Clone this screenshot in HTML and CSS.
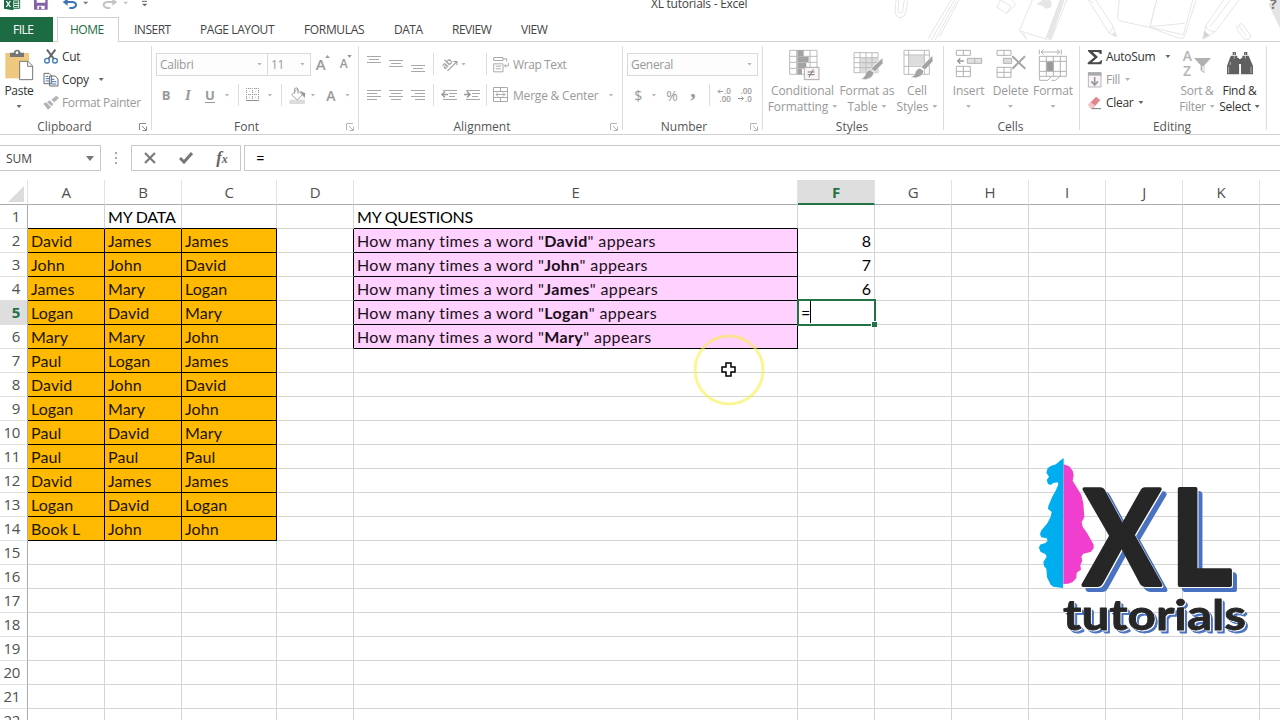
FILE: index.html
```html
<!DOCTYPE html>
<html lang="en">
<head>
<meta charset="utf-8">
<title>XL tutorials - Excel</title>
<link rel="stylesheet" href="styles.css">
</head>
<body>
<div class="app">
<header class="titlebar">
  <svg class="qat" viewBox="0 0 480 51" width="160" height="17">
    <path d="M38 0H59V25H38" fill="#fff" stroke="#1e6e42" stroke-width="3"/><path d="M42 6h13M42 13h13M42 20h13" stroke="#1e6e42" stroke-width="4"/><path d="M12 0H40V31L12 26Z" fill="#1a6b43"/><path d="M19 3L31 21M31 3L19 21" stroke="#fff" stroke-width="4"/>
    <path d="M102 0H143V29H102Z" fill="#8560a8"/><path d="M110 0H136V8H110ZM112 17H134V27H112Z" fill="#fff"/><path d="M117 20h7v8h-7z" fill="#8560a8"/>
    <path d="M194 6H217Q229 8 228 16Q225 25 208 24" fill="none" stroke="#3b73b9" stroke-width="6"/><path d="M203 -4L188 6L203 17Z" fill="#3b73b9"/><path d="M249 5h16l-8 8z" fill="#777"/>
    <path d="M345 6H322Q310 8 311 16Q314 25 331 24" fill="none" stroke="#c4c4c4" stroke-width="6"/><path d="M337 -4L352 6L337 17Z" fill="#c4c4c4"/><path d="M369 5h16l-8 8z" fill="#c4c4c4"/>
    <path d="M426 4h15" stroke="#666" stroke-width="3"/><path d="M426 11h16l-8 8z" fill="#666"/>
  </svg>
  <span class="doc-title">XL tutorials - Excel</span>
  <svg class="doodles" viewBox="0 0 1320 123" width="440" height="41" fill="none" stroke="#e6e6e6" stroke-width="3">
    <path d="M168 0L165 35Q168 53 183 53Q195 50 197 38L203 2M176 0L174 35Q179 43 187 37L193 0"/>
    <path d="M333 0L264 117M343 0L274 120M350 2L285 120M357 0L298 112"/>
    <path d="M481 0L470 22L500 40L527 14L516 0M481 0L513 18L500 40"/>
    <path d="M577 0L538 92L617 117L668 0M538 92L558 115M549 98L560 118M680 0L634 118L617 117"/><path d="M660 0L620 110L632 117L672 0Z" fill="#e6e6e6"/><path d="M592 12L610 0L633 3V20L618 25L607 16Z" fill="#e6e6e6"/>
    <path d="M745 0L808 100L829 108L820 80L767 0M808 100L820 80M748 0L762 10"/><path d="M821 98L831 110L818 106Z" fill="#ddd"/>
    <path d="M838 0L832 52Q834 62 845 64L925 81L1010 112Q1028 120 1034 108L1068 0M950 0L930 80M950 0L930 80L1033 70M1058 0L1030 104L935 83"/>
    <path d="M1150 0L1097 78L1090 116L1127 94L1197 0M1097 78Q1103 96 1127 94M1171 0L1110 81"/><path d="M1093 92L1088 117L1109 107Z" fill="#d4d4d4"/>
    <path d="M1192 75Q1187 86 1196 96L1214 117Q1230 122 1233 108L1207 72Q1197 68 1198 80L1218 107"/>
    <path d="M1285 12L1320 85V0H1300Z" fill="#e4e4e4" stroke="none"/>
  </svg>
  <span class="help">?</span>
</header>
<nav class="tabs">
  <span class="tab file">FILE</span><span class="tab home">HOME</span><span class="tab t-insert">INSERT</span><span class="tab t-page">PAGE LAYOUT</span><span class="tab t-form">FORMULAS</span><span class="tab t-data">DATA</span><span class="tab t-review">REVIEW</span><span class="tab t-view">VIEW</span>
</nav>
<section class="ribbon">
  <div class="group clipboard">
    <div class="body">
      <div class="big dark"><svg viewBox="18 147 90 96" width="30" height="32"><path d="M22 159H93V235H22Z" fill="#edc87e"/><path d="M36 158H47Q49 149 57 149Q66 149 68 158H78V171H36Z" fill="#767676"/><circle cx="57" cy="158" r="4" fill="#fff"/><path d="M65 184H90L104 198V239H65Z" fill="#fff" stroke="#777" stroke-width="3"/><path d="M89 185V199H103" fill="none" stroke="#777" stroke-width="3"/></svg><span>Paste</span><i class="arr"></i></div>
      <div class="list">
        <div class="cmd dark"><svg viewBox="129 144 48 48" width="16" height="16" fill="none"><path d="M141 146L162 174M166 146L145 174" stroke="#666" stroke-width="6"/><circle cx="141" cy="179" r="7" stroke="#3f79bb" stroke-width="4"/><circle cx="165" cy="179" r="7" stroke="#3f79bb" stroke-width="4"/></svg><span>Cut</span></div>
        <div class="cmd dark"><svg viewBox="127 214 48 48" width="16" height="16" fill="#fff" stroke="#6b6b6b" stroke-width="3"><path d="M130 218H145L152 225V249H130ZM147 226H164L172 235V256H147Z"/><path d="M135 227H143M135 234H145M135 241H145M152 236H161M152 243H167M152 250H167" stroke="#3f79bb"/></svg><span>Copy</span><i class="arr"></i></div>
        <div class="cmd"><svg viewBox="129 282 48 48" width="16" height="16" fill="#b3b3b3"><path d="M169 284L177 291L163 304L154 296ZM149 298L160 309L155 316L141 303ZM138 304L153 318L144 326L130 308Z"/></svg><span>Format Painter</span></div>
      </div>
    </div>
    <div class="label">Clipboard<svg class="launch" viewBox="0 0 8 8" width="8" height="8"><path d="M.5 7V.5H7M3 3L7 7M7.500 3.500V7.500H3.500" fill="none" stroke="#888"/></svg></div>
  </div>

  <div class="group font">
    <div class="body rows">
      <div class="row r1"><span class="combo">Calibri<i class="arr"></i></span><span class="combo">11<i class="arr"></i></span>
        <span class="grow">A<svg viewBox="0 0 6 4" width="5" height="3"><path d="M0 4L3 0L6 4Z" fill="#999"/></svg></span><span class="grow small">A<svg viewBox="0 0 6 4" width="5" height="3"><path d="M0 0L3 4L6 0Z" fill="#999"/></svg></span></div>
      <div class="row r2"><b>B</b><b class="ital">I</b><b class="und">U</b><i class="arr"></i><i class="sep"></i>
        <svg viewBox="0 0 14 14" width="14" height="14"><path d="M.5 0V13M3.500 0V13M6.500 0V13M9.500 0V13M12.500 0V13" stroke="#c9c9c9" stroke-dasharray="1 2"/><path d="M0 .5H13M0 6.500H13M6.500 0V13M.5 0V13M12.500 0V13" stroke="#a2a2a2" stroke-dasharray="1 1"/><path d="M0 12.500H13" stroke="#909090"/></svg><i class="arr"></i><i class="sep"></i>
        <svg viewBox="416 138 51 51" width="17" height="17"><path d="M417 176H464V189H417Z" fill="#dcdcdc"/><path d="M439 145L456 161L441 177L424 162Z" fill="#fff" stroke="#aaa" stroke-width="3"/><path d="M433 158V143Q438 138 443 143V158" fill="none" stroke="#999" stroke-width="3"/><path d="M449 149L465 157L463 172L456 162Z" fill="#999"/></svg><i class="arr"></i><b class="fontcolor">A</b><i class="arr"></i></div>
    </div>
    <div class="label">Font<svg class="launch" viewBox="0 0 8 8" width="8" height="8"><path d="M.5 7V.5H7M3 3L7 7M7.500 3.500V7.500H3.500" fill="none" stroke="#b5b5b5"/></svg></div>
  </div>

  <div class="group align">
    <div class="body rows">
      <div class="row r1">
        <svg viewBox="0 0 14 22" width="14" height="22" stroke="#a8a8a8"><path d="M0 3.500H14M2 6.500H12M0 9.500H14"/></svg>
        <svg viewBox="0 0 14 22" width="14" height="22" stroke="#a8a8a8"><path d="M0 7.500H14M2 10.500H12M0 13.500H14"/></svg>
        <svg viewBox="0 0 14 22" width="14" height="22" stroke="#a8a8a8"><path d="M0 12.500H14M2 15.500H12M0 18.500H14"/></svg>
        <i class="sep"></i>
        <svg viewBox="183 50 50 50" width="17" height="17"><text x="186" y="86" transform="rotate(-45 196 78)" class="svg-ab">ab</text><path d="M202 94L229 67M219 66H230V77" fill="none" stroke="#999" stroke-width="3"/></svg>
        <i class="arr near"></i><i class="sep"></i>
        <svg viewBox="341 46 48 50" width="16" height="17" fill="none" stroke="#aaa" stroke-width="3"><path d="M343 50H371V59H343ZM343 69H371V93H343ZM349 76H365M349 84H365M371 54H382V62M388 66V75H376M380 70L375 75L380 80"/></svg>
        <span class="wrap">Wrap Text</span>
      </div>
      <div class="row r2">
        <svg viewBox="0 0 14 12" width="14" height="12" stroke="#a8a8a8"><path d="M0 1.500H14M0 4.500H10M0 7.500H14M0 10.500H10"/></svg>
        <svg viewBox="0 0 14 12" width="14" height="12" stroke="#a8a8a8"><path d="M0 1.500H14M2 4.500H12M0 7.500H14M2 10.500H12"/></svg>
        <svg viewBox="0 0 14 12" width="14" height="12" stroke="#a8a8a8"><path d="M0 1.500H14M4 4.500H14M0 7.500H14M4 10.500H14"/></svg>
        <i class="sep"></i>
        <svg viewBox="0 0 16 12" width="16" height="12" stroke="#a8a8a8" fill="none"><path d="M2 1.500H16M8 4.500H16M8 7.500H14M2 10.500H16"/><path d="M1 5.500H7M4 2.500L1 5.500L4 8.500" stroke="#999" stroke-width="1.500"/></svg>
        <svg viewBox="0 0 16 12" width="16" height="12" stroke="#a8a8a8" fill="none"><path d="M2 1.500H16M8 4.500H16M8 7.500H14M2 10.500H16"/><path d="M0 5.500H6M3 2.500L6 5.500L3 8.500" stroke="#999" stroke-width="1.500"/></svg>
        <i class="sep"></i>
        <svg viewBox="0 0 16 16" width="16" height="16" stroke="#aaa" fill="none"><path d="M.5 .5H14.500V14.500H.5ZM.5 4.500H14.500M.5 10.500H14.500M7.500 0V4M7.500 11V15M3 7.500H12M5 5.500L3 7.500L5 9.500M10 5.500L12 7.500L10 9.500"/></svg>
        <span class="merge">Merge &amp; Center</span><i class="arr"></i>
      </div>
    </div>
    <div class="label">Alignment<svg class="launch" viewBox="0 0 8 8" width="8" height="8"><path d="M.5 7V.5H7M3 3L7 7M7.500 3.500V7.500H3.500" fill="none" stroke="#b5b5b5"/></svg></div>
  </div>

  <div class="group number">
    <div class="body rows">
      <div class="row r1"><span class="combo">General<i class="arr"></i></span></div>
      <div class="row r2"><span class="sym">$</span><i class="arr"></i><span class="sym">%</span><b class="comma">,</b><i class="sep"></i>
        <svg viewBox="0 0 16 14" width="16" height="14"><text x="7" y="6" class="svg-dec">.0</text><text x="2.500" y="13.500" class="svg-dec">.00</text><path d="M1 3.500H6M3 1.500L1 3.500L3 5.500" fill="none" stroke="#999"/></svg>
        <i></i>
        <svg viewBox="0 0 16 14" width="16" height="14"><text x="2.500" y="6" class="svg-dec">.00</text><text x="7" y="13.500" class="svg-dec">.0</text><path d="M0 10.500H5.500M3.500 8.500L5.500 10.500L3.500 12.500" fill="none" stroke="#999"/></svg></div>
    </div>
    <div class="label">Number<svg class="launch" viewBox="0 0 8 8" width="8" height="8"><path d="M.5 7V.5H7M3 3L7 7M7.500 3.500V7.500H3.500" fill="none" stroke="#b5b5b5"/></svg></div>
  </div>

  <div class="group styles">
    <div class="body">
      <div class="big"><svg class="cf" viewBox="506 27 93 96" width="31" height="32"><path d="M508 31H590V103H508Z" fill="#fff" stroke="#bbb" stroke-width="3"/><path d="M508 49H590M508 67H590M508 85H590M529 31V103M569 31V103" stroke="#bbb" stroke-width="3"/><path d="M531 31H550V49H531ZM531 50H565V66H531ZM531 68H558V84H531ZM531 86H545V103H531Z" fill="#a3a3a3"/><path d="M552 82H596V119H552Z" fill="#fbf5fa" stroke="#aaa" stroke-width="3"/><path d="M562 96H583M562 104H583M579 88L566 112" stroke="#777" stroke-width="3"/></svg><span>Conditional</span><span>Formatting<i class="arr"></i></span></div>
      <div class="big"><svg class="ft" viewBox="700 27 93 96" width="31" height="32"><path d="M703 38H775V98H703Z" fill="#fff" stroke="#bbb" stroke-width="3"/><path d="M722 54H775V98H722Z" fill="#ddd"/><path d="M703 53H775M703 68H775M703 83H775M721 38V98M739 38V98M757 38V98" stroke="#bbb" stroke-width="3"/><path d="M789 53L790 70L766 95L754 86ZM751 89L763 98Q760 114 738 119L722 117Q736 113 738 99Q742 91 751 89Z" fill="#a3a3a3" stroke="#fff" stroke-width="2"/></svg><span>Format as</span><span>Table<i class="arr"></i></span></div>
      <div class="big"><svg class="cf" viewBox="850 27 93 96" width="31" height="32"><path d="M853 31H929V103H853Z" fill="#fff" stroke="#bbb" stroke-width="3"/><path d="M868 46H914V77H868Z" fill="#ddd"/><path d="M853 45H929M853 79H929M867 31V103M914 31V103" stroke="#bbb" stroke-width="3"/><path d="M939 46L940 64L916 90L904 81ZM901 84L913 93Q910 109 888 114L872 112Q886 108 888 94Q892 86 901 84Z" fill="#a3a3a3" stroke="#fff" stroke-width="2"/></svg><span>Cell</span><span>Styles<i class="arr"></i></span></div>
    </div>
    <div class="label">Styles</div>
  </div>

  <div class="group cells">
    <div class="body">
      <div class="big"><svg viewBox="75 27 84 96" width="28" height="32" fill="#fff" stroke="#b2b2b2" stroke-width="3"><path d="M79 31H121V46H79ZM100 31V46M79 79H121V110H79ZM100 79V110M79 94H121"/><path d="M112 55H155V70H112Z" fill="#e2e2e2"/><path d="M134 55V70"/><path d="M83 63H102M91 55L83 63L91 71" fill="none" stroke="#999" stroke-width="4"/></svg><span>Insert</span><i class="arr"></i></div>
      <div class="big"><svg viewBox="199 27 90 96" width="30" height="32" fill="#fff" stroke="#b2b2b2" stroke-width="3"><path d="M202 31H244V46H202ZM223 31V46M202 82H244V112H202ZM223 82V112M202 97H244"/><path d="M221 55H246V70H221Z" fill="#ddd"/><path d="M248 49L287 86M286 49L248 86" stroke="#a5a5a5" stroke-width="6"/></svg><span>Delete</span><i class="arr"></i></div>
      <div class="big"><svg viewBox="325 25 90 96" width="30" height="32" fill="none" stroke="#b2b2b2" stroke-width="3"><path d="M329 27V41M395 27V41M334 34H390M342 27L334 34L342 41M382 27L390 34L382 41M329 47H410V107H329ZM329 62H410M329 92H410M350 47V107M371 47V107M392 47V107M330 107V119H354L365 108M365 119H377L390 108"/><path d="M351 63H371V91H351Z" fill="#999"/></svg><span>Format</span><i class="arr"></i></div>
    </div>
    <div class="label">Cells</div>
  </div>

  <div class="group editing">
    <div class="body">
      <div class="list">
        <div class="cmd dark"><svg viewBox="470 22 48 48" width="16" height="16"><path d="M473 25H514V37H509Q508 31 500 31H487L503 46L485 62H503Q511 61 512 56H516L513 68H472V63L492 47L473 29Z" fill="#4a4a4a"/></svg><span>AutoSum</span><i class="arr"></i></div>
        <div class="cmd"><svg viewBox="472 93 48 48" width="16" height="16"><path d="M476 95H514V138H476Z" fill="#faf3f9" stroke="#b5b5b5" stroke-width="3"/><path d="M475 94H515V104H475Z" fill="#aaa"/><path d="M495 108V131M485 121L495 132L505 121" fill="none" stroke="#999" stroke-width="5"/></svg><span>Fill</span><i class="arr"></i></div>
        <div class="cmd dark"><svg viewBox="473 163 48 48" width="16" height="16"><path d="M500 168L513 178L492 202H482L477 192Z" fill="#e5858f"/><path d="M482 184L498 195L490 202H482L477 193Z" fill="#f5c6ca"/><path d="M486 204H515" stroke="#777" stroke-width="3"/></svg><span>Clear</span><i class="arr"></i></div>
      </div>
      <div class="big"><svg viewBox="756 27 90 96" width="30" height="32"><text x="758" y="62" class="svg-az">A</text><text x="759" y="109" class="svg-az">Z</text><path d="M792 54H843L823 76V100L812 91V76Z" fill="#b0b0b0"/><path d="M817 78H821V95L817 91Z" fill="#fff"/></svg><span>Sort &amp;</span><span>Filter<i class="arr"></i></span></div>
      <div class="big dark"><svg viewBox="888 27 84 96" width="28" height="32" fill="#606060"><path d="M904 47H922V54H927V103H891V78L901 50ZM937 47H956L969 78V103H933V54H937ZM922 57H937V72H922ZM908 36H918V45H908ZM942 36H952V45H942Z"/><path d="M896 80V100M901 66V75M963 80V100M929 76V103M913 38V56M946 38V56" stroke="#ddd" stroke-width="2"/></svg><span>Find &amp;</span><span>Select<i class="arr"></i></span></div>
    </div>
    <div class="label">Editing</div>
  </div>
</section>
<section class="formula">
  <div class="namebox">SUM<svg viewBox="0 0 8 5" width="8" height="5"><path d="M0 0H8L4 5Z" fill="#777"/></svg></div>
  <svg class="grip" viewBox="0 0 2 12" width="2" height="12" fill="#aaa"><path d="M0 0H2V2H0ZM0 5H2V7H0ZM0 10H2V12H0Z"/></svg>
  <div class="fxbox">
    <svg viewBox="0 0 12 12" width="12" height="12" stroke="#777" stroke-width="2"><path d="M1 1L11 11M11 1L1 11"/></svg>
    <svg viewBox="0 0 14 12" width="14" height="12" fill="none" stroke="#777" stroke-width="3"><path d="M1 6L5 10L13 1"/></svg>
    <span class="fx">f<small>x</small></span>
  </div>
  <div class="finput">=</div>
</section>
<table class="sheet">
<colgroup><col class="c0"><col class="cn"><col class="cn"><col class="cc"><col class="cn"><col class="ce"><col class="cn"><col class="cn"><col class="cn"><col class="cn"><col class="cn"><col class="cn"><col class="cl"></colgroup>
<thead><tr><th><svg class="corner" viewBox="0 0 16 16" width="16" height="16"><path d="M16 0V16H0Z" fill="#dcdcdc"/></svg></th><th>A</th><th>B</th><th>C</th><th>D</th><th>E</th><th class="active">F</th><th>G</th><th>H</th><th>I</th><th>J</th><th>K</th><th></th></tr></thead>
<tbody>
<tr><th>1</th><td class="ub"></td><td class="ub title">MY DATA</td><td class="ub"></td><td></td><td class="ub title">MY QUESTIONS</td><td></td><td></td><td></td><td></td><td></td><td></td><td></td></tr>
<tr><th>2</th><td class="o">David</td><td class="o">James</td><td class="o">James</td><td class="rb"></td><td class="p">How many times a word "<b>David</b>" appears</td><td class="n">8</td><td></td><td></td><td></td><td></td><td></td><td></td></tr>
<tr><th>3</th><td class="o">John</td><td class="o">John</td><td class="o">David</td><td class="rb"></td><td class="p">How many times a word "<b>John</b>" appears</td><td class="n">7</td><td></td><td></td><td></td><td></td><td></td><td></td></tr>
<tr><th>4</th><td class="o">James</td><td class="o">Mary</td><td class="o">Logan</td><td class="rb"></td><td class="p">How many times a word "<b>James</b>" appears</td><td class="n">6</td><td></td><td></td><td></td><td></td><td></td><td></td></tr>
<tr><th class="active">5</th><td class="o">Logan</td><td class="o">David</td><td class="o">Mary</td><td class="rb"></td><td class="p">How many times a word "<b>Logan</b>" appears</td><td class="edit"><div class="editor">=<i class="caret"></i><i class="handle"></i></div></td><td></td><td></td><td></td><td></td><td></td><td></td></tr>
<tr><th>6</th><td class="o">Mary</td><td class="o">Mary</td><td class="o">John</td><td class="rb"></td><td class="p">How many times a word "<b>Mary</b>" appears</td><td></td><td></td><td></td><td></td><td></td><td></td><td></td></tr>
<tr><th>7</th><td class="o">Paul</td><td class="o">Logan</td><td class="o">James</td><td></td><td></td><td></td><td></td><td></td><td></td><td></td><td></td><td></td></tr>
<tr><th>8</th><td class="o">David</td><td class="o">John</td><td class="o">David</td><td></td><td></td><td></td><td></td><td></td><td></td><td></td><td></td><td></td></tr>
<tr><th>9</th><td class="o">Logan</td><td class="o">Mary</td><td class="o">John</td><td></td><td></td><td></td><td></td><td></td><td></td><td></td><td></td><td></td></tr>
<tr><th>10</th><td class="o">Paul</td><td class="o">David</td><td class="o">Mary</td><td></td><td></td><td></td><td></td><td></td><td></td><td></td><td></td><td></td></tr>
<tr><th>11</th><td class="o">Paul</td><td class="o">Paul</td><td class="o">Paul</td><td></td><td></td><td></td><td></td><td></td><td></td><td></td><td></td><td></td></tr>
<tr><th>12</th><td class="o">David</td><td class="o">James</td><td class="o">James</td><td></td><td></td><td></td><td></td><td></td><td></td><td></td><td></td><td></td></tr>
<tr><th>13</th><td class="o">Logan</td><td class="o">David</td><td class="o">Logan</td><td></td><td></td><td></td><td></td><td></td><td></td><td></td><td></td><td></td></tr>
<tr><th>14</th><td class="o">Book L</td><td class="o">John</td><td class="o">John</td><td></td><td></td><td></td><td></td><td></td><td></td><td></td><td></td><td></td></tr>
<tr><th>15</th><td></td><td></td><td></td><td></td><td></td><td></td><td></td><td></td><td></td><td></td><td></td><td></td></tr>
<tr><th>16</th><td></td><td></td><td></td><td></td><td></td><td></td><td></td><td></td><td></td><td></td><td></td><td></td></tr>
<tr><th>17</th><td></td><td></td><td></td><td></td><td></td><td></td><td></td><td></td><td></td><td></td><td></td><td></td></tr>
<tr><th>18</th><td></td><td></td><td></td><td></td><td></td><td></td><td></td><td></td><td></td><td></td><td></td><td></td></tr>
<tr><th>19</th><td></td><td></td><td></td><td></td><td></td><td></td><td></td><td></td><td></td><td></td><td></td><td></td></tr>
<tr><th>20</th><td></td><td></td><td></td><td></td><td></td><td></td><td></td><td></td><td></td><td></td><td></td><td></td></tr>
<tr><th>21</th><td></td><td></td><td></td><td></td><td></td><td></td><td></td><td></td><td></td><td></td><td></td><td></td></tr>
<tr><th>22</th><td></td><td></td><td></td><td></td><td></td><td></td><td></td><td></td><td></td><td></td><td></td><td></td></tr>
</tbody>
</table>
<svg class="pointer" viewBox="0 0 72 72" width="72" height="72"><circle cx="36" cy="36" r="34" fill="none" stroke="#f5ee3c" stroke-opacity=".55" stroke-width="3"/><path d="M33 29H38V33H42V38H38V42H33V38H29V33H33Z" fill="#fff" stroke="#000" stroke-width="1.500"/></svg>
<svg class="logo" viewBox="0 0 260 210" width="260" height="210">
  <g transform="scale(.33333)" stroke-linejoin="round">
    <path fill="#00adee" d="M131 54L120 62L108 73L92 78L83 85L79 98L87 110L80 120L84 132L92 135L100 129L113 127L115 133L108 150L96 172L85 198L84 206L95 216L92 230L82 250L63 272L60 283L64 292L80 295L83 302L76 309L60 314L57 324L62 336L76 342L80 350L70 366L72 378L79 386L81 412L92 434L100 440L129 444Z"/>
    <path fill="#f03fce" d="M131 73L148 79L158 92L161 105L158 122L170 142L184 165L190 190L193 232L185 246L188 260L203 282L221 314L221 325L212 336L190 341L184 350L187 362L181 376L183 389L170 398L169 414L158 426L145 431L130 432Z"/>
  </g>
  <g class="ink big-ink"><text x="63" y="145" textLength="78" lengthAdjust="spacingAndGlyphs">X</text><text x="150" y="145" textLength="62" lengthAdjust="spacingAndGlyphs">L</text></g>
  <text class="ink small-ink" x="43" y="190" textLength="183" lengthAdjust="spacingAndGlyphs">tutorials</text>
</svg>
</div>
</body>
</html>
```
FILE: styles.css
```css
* { box-sizing: border-box; }
body { margin: 0; font-family: "Open Sans", "Noto Sans", sans-serif; font-size: 12px; color: #444; background: #fff; }
.app { position: relative; width: 1280px; height: 720px; overflow: hidden; }
svg { display: block; flex: none; }
i { font-style: normal; }

.titlebar { display: flex; height: 17px; width: 1280px; }
.qat { flex: none; }
.doc-title { width: 98px; margin-left: 491px; line-height: 17px; margin-top: -5px; font-size: 12px; letter-spacing: -.25px; white-space: nowrap; }
.doodles { margin-left: 91px; }
.help { margin-left: -10px; margin-top: -4px; font-size: 14px; font-weight: 700; line-height: 16px; color: #777; width: 10px; }

.tabs { display: flex; height: 25px; border-bottom: 1px solid #d0d0d0; }
.tab { line-height: 25px; height: 25px; letter-spacing: -.5px; white-space: nowrap; }
.file { width: 53px; background: #1d6b43; color: #fff; padding-left: 13px; }
.home { width: 62px; margin-left: 4px; padding-left: 12px; line-height: 24px; background: #fff; color: #1d6b43; border: 1px solid #d0d0d0; border-bottom: 0; }
.t-insert { margin-left: 15px; width: 66px; }
.t-page { width: 104px; letter-spacing: -.4px; }
.t-form { width: 90px; letter-spacing: -.35px; }
.t-data { width: 58px; }
.t-review { width: 69px; }

.ribbon { display: flex; height: 93px; border-bottom: 1px solid #d0d0d0; padding-top: 4px; }
.group { height: 84px; border-right: 1px solid #dcdcdc; flex: none; color: #999; letter-spacing: -.3px; }
.clipboard { width: 152px; }
.font { width: 207px; }
.align { width: 264px; }
.number { width: 140px; }
.styles { width: 181px; }
.cells { width: 136px; }
.editing { width: 187px; }
.body { height: 71px; display: grid; }
.label { position: relative; height: 13px; line-height: 19px; text-align: center; color: #555; letter-spacing: 0; padding-right: 22px; }
.font .label, .align .label, .number .label { padding-right: 17px; }
.styles .label, .cells .label, .editing .label { padding-right: 2px; }
.launch { position: absolute; right: 4px; top: 6px; }
.dark { color: #333; }
.arr { display: inline-block; width: 5px; height: 3px; background: #b5b5b5; clip-path: polygon(0 0, 100% 0, 50% 100%); flex: none; }
.dark .arr { background: #666; }
.sep { width: 1px; height: 22px; background: #dcdcdc; }

.big { display: flex; flex-direction: column; align-items: center; padding-top: 3px; line-height: 16px; white-space: nowrap; }
.big svg { margin-bottom: 2px; }
.big .cf { margin-left: 3px; }
.big .ft { margin-left: 2px; }
.big > span .arr { margin: 0 0 3px 4px; }
.big > .arr { margin-top: 6px; }
.clipboard .body { grid-template-columns: 38px 110px; column-gap: 5px; }
.styles .body { grid-template-columns: 71px 58px 42px; padding-left: 4px; letter-spacing: -.1px; }
.cells .body { grid-template-columns: 41px 43px 42px; padding-left: 4px; letter-spacing: -.1px; }
.editing .body { grid-template-columns: 92px 42px 43px; padding-left: 4px; }
.list { display: grid; grid-template-rows: repeat(3, 23px); margin-top: -1px; }
.editing .list { padding-left: 3px; }
.cmd { display: flex; align-items: center; white-space: nowrap; }
.cmd span { margin-left: 3px; }
.clipboard .cmd .arr { margin-left: 10px; }
.clipboard .cmd { letter-spacing: -.35px; }
.editing .cmd .arr { margin-left: 5px; }
.editing .cmd:first-child .arr { margin-left: 10px; }

.rows { grid-template-rows: 36px 26px; padding-top: 0; }
.row { display: grid; align-items: center; justify-items: center; }
.rows .r2 { height: 26px; }
.combo { display: flex; align-items: center; justify-content: space-between; justify-self: stretch; height: 23px; border: 1px solid #dadada; padding: 0 5px 0 3px; background: #fdfdfd; }
.font .r1 { grid-template-columns: 112px 43px 24px 22px; padding-left: 4px; }
.font .r1 .combo + .combo { border-left-width: 0; }
.grow { display: flex; align-items: flex-start; font-size: 15px; line-height: 18px; font-weight: 600; color: #999; }
.grow.small { font-size: 12px; }
.font .r2 { grid-template-columns: 22px 22px 22px 12px 10px 20px 14px 8px 24px 8px 28px 5px; padding-left: 3px; }
.r2 b { font-size: 13px; color: #999; letter-spacing: 0; }
.r2 .ital { font-family: "Liberation Serif", serif; font-style: italic; font-size: 15px; }
.r2 .und { text-decoration: underline; text-underline-offset: 2px; }
.r2 .fontcolor { font-size: 14px; font-weight: 600; }
.align .row { grid-template-columns: 22px 22px 22px 8px 24px 21px 8px 22px 93px 12px; padding-left: 4px; }
.near { justify-self: start; }
.wrap, .merge { justify-self: start; white-space: nowrap; padding-left: 1px; }
.merge { letter-spacing: -.2px; }
.wrap { letter-spacing: -.4px; }
.number .r1 { padding: 0 4px 0 4px; }
.number .r2 { grid-template-columns: 22px 10px 26px 16px 16px 16px 5px 16px; padding-left: 4px; }
.sym { font-size: 14px; }
.r2 .comma { font: 700 22px "Liberation Serif", serif; line-height: 14px; margin-top: -10px; }
.svg-dec { font: 600 8px "Open Sans", sans-serif; fill: #999; letter-spacing: 0; }
.svg-ab { font: 600 28px "Open Sans", sans-serif; fill: #999; }
.svg-az { font: 600 42px "Open Sans", sans-serif; fill: #b5b5b5; letter-spacing: 0; }

.formula { display: flex; height: 45px; padding-top: 10px; align-items: flex-start; }
.namebox { width: 101px; height: 26px; border: 1px solid #c8c8c8; border-left: 0; display: flex; align-items: center; justify-content: space-between; padding: 0 6px; letter-spacing: 0; }
.grip { margin: 7px 14px 0; }
.fxbox { width: 110px; height: 26px; border: 1px solid #c8c8c8; display: grid; grid-template-columns: 36px 36px 36px; place-items: center; }
.fx { font: italic 700 17px "Liberation Serif", serif; color: #666; line-height: 20px; }
.fx small { font-size: 12px; }
.finput { flex: 1; height: 26px; margin-left: 3px; border: 1px solid #c8c8c8; border-right: 0; font: 15px/24px Lato, sans-serif; color: #000; padding-left: 11px; }

.sheet { table-layout: fixed; width: 1280px; border-spacing: 0; border-collapse: separate; }
.c0 { width: 28px; } .cn { width: 77px; } .cc { width: 95px; } .ce { width: 444px; } .cl { width: 20px; }
.sheet th, .sheet td { height: 24px; padding: 0; line-height: 23px; border: 0 solid #d4d4d4; border-width: 0 1px 1px 0; white-space: nowrap; }
.sheet tr > :last-child { border-right: 0; }
.sheet th { font-weight: 400; font-size: 15px; color: #505050; letter-spacing: -.3px; }
.sheet thead th { height: 25px; border-bottom-color: #ababab; border-right-color: #e2e2e2; }
.sheet tbody th { border-right-color: #ababab; text-align: right; padding-right: 7px; border-bottom-color: #e0e0e0; }
.corner { margin: 3px 0 0 8px; }
.sheet th.active { background: #dedede; color: #217346; font-weight: 700; }
.sheet thead th.active { border-bottom: 2px solid #217346; line-height: 22px; }
.sheet td { font-family: Lato, sans-serif; font-size: 16px; font-variant-ligatures: none; color: #000; padding-left: 3px; }
.sheet td.ub { border-bottom-color: #000; }
.sheet td.title { letter-spacing: -.2px; }
.sheet td.rb { border-right-color: #000; }
.sheet td.o { background: #ffb900; border-color: #000; color: #201500; letter-spacing: .1px; }
.sheet td.p { background: #ffd1fe; border-color: #000; color: #1a101a; letter-spacing: .36px; }
.sheet td.n { text-align: right; padding-right: 3px; }
.sheet td.edit { padding: 0; }
.editor { position: relative; height: 27px; width: 79px; margin: -2px -2px -2px -1px; border: 2px solid #217346; background: #fff; padding-left: 2px; line-height: 24px; display: flex; }
.caret { width: 1px; height: 22px; background: #000; }
.handle { position: absolute; right: -3px; bottom: -3px; width: 6px; height: 6px; background: #217346; border: 1px solid #fff; border-width: 1px 0 0 1px; }

.pointer { position: absolute; left: 693px; top: 334px; }
.logo { position: absolute; left: 1020px; top: 440px; }
.ink { font-family: Lato, sans-serif; font-weight: 700; fill: #262626; stroke: #262626; stroke-linejoin: round; }
.big-ink { font-size: 133px; stroke-width: 4px; filter: drop-shadow(1px 1px 0 #fff) drop-shadow(4px 4px 0 #4a72c2); }
.small-ink { font-size: 42px; stroke-width: .8px; filter: drop-shadow(1px 1px 0 #fff) drop-shadow(2px 2px 0 #4a72c2); }
```
